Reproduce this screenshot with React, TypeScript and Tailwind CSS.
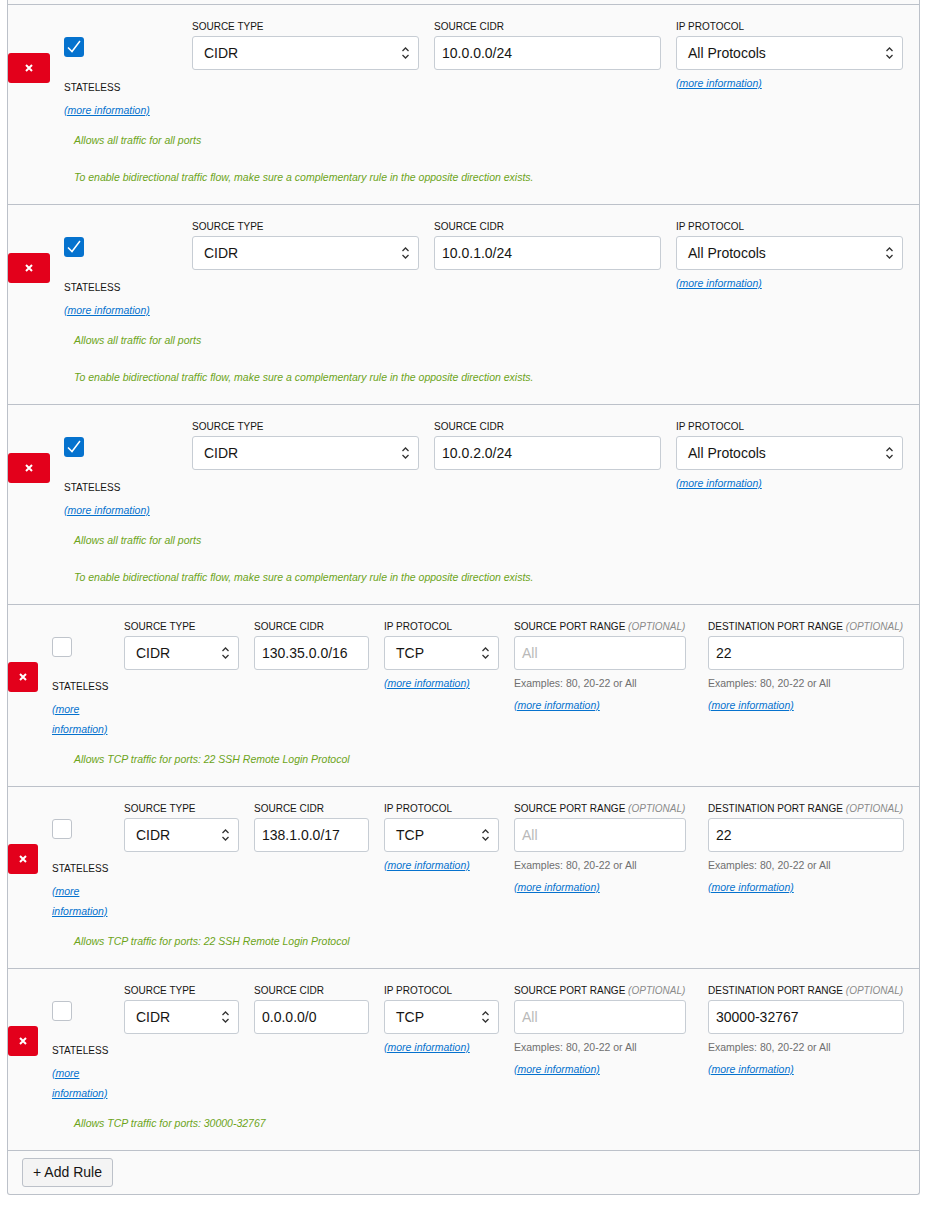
import React from "react";

type Field = {
  label: string;
  optional?: boolean;
  kind: "select" | "input";
  value: string;
  placeholder?: boolean;
  width: string;
  extra?: "more" | "examples";
};

interface Rule {
  checked: boolean;
  compact: boolean;
  fields: Field[];
  notes: string[];
}

const allRule = (cidr: string): Rule => ({
  checked: true,
  compact: false,
  fields: [
    { label: "Source Type", kind: "select", value: "CIDR", width: "flex-1" },
    { label: "Source CIDR", kind: "input", value: cidr, width: "flex-1" },
    { label: "IP Protocol", kind: "select", value: "All Protocols", width: "flex-1", extra: "more" },
  ],
  notes: [
    "Allows all traffic for all ports",
    "To enable bidirectional traffic flow, make sure a complementary rule in the opposite direction exists.",
  ],
});

const tcpRule = (cidr: string, port: string, note: string): Rule => ({
  checked: false,
  compact: true,
  fields: [
    { label: "Source Type", kind: "select", value: "CIDR", width: "w-[115px]" },
    { label: "Source CIDR", kind: "input", value: cidr, width: "w-[115px]" },
    { label: "IP Protocol", kind: "select", value: "TCP", width: "w-[115px]", extra: "more" },
    { label: "Source Port Range", optional: true, kind: "input", value: "All", placeholder: true, width: "w-[172px]", extra: "examples" },
    { label: "Destination Port Range", optional: true, kind: "input", value: port, width: "w-[196px] ml-[7px]", extra: "examples" },
  ],
  notes: [note],
});

const rules: Rule[] = [
  allRule("10.0.0.0/24"),
  allRule("10.0.1.0/24"),
  allRule("10.0.2.0/24"),
  tcpRule("130.35.0.0/16", "22", "Allows TCP traffic for ports: 22 SSH Remote Login Protocol"),
  tcpRule("138.1.0.0/17", "22", "Allows TCP traffic for ports: 22 SSH Remote Login Protocol"),
  tcpRule("0.0.0.0/0", "30000-32767", "Allows TCP traffic for ports: 30000-32767"),
];

function MoreInfo({ className = "" }: { className?: string }) {
  return (
    <div className={`text-[10.5px] leading-[20px] ${className}`}>
      <a className="italic text-[#0572ce] underline">(more information)</a>
    </div>
  );
}

function Chevrons() {
  return (
    <svg width="9" height="14" viewBox="0 0 9 14" fill="none" stroke="#333" strokeWidth="1.3">
      <path d="M1.5 5 L4.5 2 L7.5 5" />
      <path d="M1.5 9 L4.5 12 L7.5 9" />
    </svg>
  );
}

function FieldBox({ field }: { field: Field }) {
  return (
    <div className={`${field.width} min-w-0 flex flex-col`}>
      <div className="text-[10px] leading-[12px] uppercase text-[#161513] whitespace-nowrap mb-[3px]">
        {field.label}
        {field.optional && <span className="italic text-[#8a8a8a]"> (optional)</span>}
      </div>
      {field.kind === "select" ? (
        <div className="h-[34px] bg-white border border-[#c7cdd4] rounded-[3px] flex items-center justify-between pl-[11px] pr-[8px] text-[14px] text-[#161513]">
          <span>{field.value}</span>
          <Chevrons />
        </div>
      ) : (
        <div
          className={`h-[34px] bg-white border border-[#c7cdd4] rounded-[3px] flex items-center pl-[7px] text-[14px] ${
            field.placeholder ? "text-[#b9b9b9]" : "text-[#161513]"
          }`}
        >
          {field.value}
        </div>
      )}
      {field.extra === "more" && <MoreInfo className="mt-[3px]" />}
      {field.extra === "examples" && (
        <>
          <div className="mt-[3px] text-[10.5px] leading-[20px] text-[#6f6f6f]">Examples: 80, 20-22 or All</div>
          <MoreInfo className="mt-[2px]" />
        </>
      )}
    </div>
  );
}

function RuleRow({ rule }: { rule: Rule }) {
  return (
    <div className="border-t border-[#bcc1c9]">
      <div className="flex items-start pt-[16px] pb-[12px]">
        {/* delete */}
        <button
          className={`self-center mb-[6px] h-[30px] ${
            rule.compact ? "w-[30px]" : "w-[42px]"
          } bg-[#e3001b] rounded-[3px] flex items-center justify-center shrink-0`}
        >
          <svg width="8" height="8" viewBox="0 0 8 8" stroke="white" strokeWidth="2">
            <path d="M1 1 L7 7 M7 1 L1 7" />
          </svg>
        </button>

        {/* stateless */}
        <div className={`ml-[14px] ${rule.compact ? "w-[57px]" : "w-[113px]"} shrink-0 pt-[16px] flex flex-col`}>
          {rule.checked ? (
            <div className="w-[20px] h-[20px] bg-[#0572ce] rounded-[3px] flex items-center justify-center">
              <svg width="20" height="20" viewBox="0 0 20 20" fill="none" stroke="white" strokeWidth="1.5">
                <path d="M4 10.5 L8 14.5 L16 4" />
              </svg>
            </div>
          ) : (
            <div className="w-[20px] h-[20px] bg-white border border-[#bfc4cb] rounded-[3px]" />
          )}
          <div
            className={`${
              rule.compact ? "mt-[18px]" : "mt-[19px]"
            } text-[10px] leading-[24px] text-[#161513] whitespace-nowrap`}
          >
            STATELESS
          </div>
          <MoreInfo />
        </div>

        {/* fields */}
        <div className={`ml-[15px] flex-1 flex gap-[15px] ${rule.compact ? "" : "pr-[16px]"}`}>
          {rule.fields.map((f) => (
            <FieldBox key={f.label} field={f} />
          ))}
        </div>
      </div>

      <div className="pl-[66px] pb-[19px] flex flex-col gap-[21px]">
        {rule.notes.map((n) => (
          <div key={n} className="text-[10.5px] leading-[16px] italic text-[#6ca419]">
            {n}
          </div>
        ))}
      </div>
    </div>
  );
}

export default function App() {
  return (
    <div className="min-h-screen bg-white font-['Liberation_Sans',Arial,sans-serif] pl-[7px] pr-[8px]">
      <div className="bg-[#fafafa] border-x border-b border-[#bcc1c9] rounded-b-[3px]">
        <div className="h-[4px]" />
        {rules.map((r, i) => (
          <RuleRow key={i} rule={r} />
        ))}
        <div className="border-t border-[#bcc1c9] pt-[7px] pb-[7px] pl-[14px]">
          <button className="h-[29px] w-[91px] bg-[#f4f4f4] border border-[#bcc1c9] rounded-[3px] text-[14px] text-[#161513]">
            + Add Rule
          </button>
        </div>
      </div>
    </div>
  );
}
